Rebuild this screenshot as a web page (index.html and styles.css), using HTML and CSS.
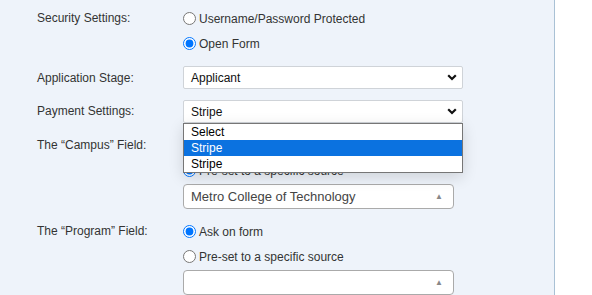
FILE: index.html
```html
<!DOCTYPE html>
<html lang="en">
<head>
  <meta charset="UTF-8" />
  <meta name="viewport" content="width=device-width, initial-scale=1.0"/>
  <title>Form settings</title>
  <link rel="stylesheet" href="styles.css">
</head>
<body>
  <div class="panel">
    <div class="form-grid">
      <div class="label">Security Settings:</div>
      <div class="field">
        <label class="radio"><input type="radio" name="security"> Username/Password Protected</label>
        <label class="radio"><input type="radio" name="security" checked> Open Form</label>
      </div>

      <div class="label stage">Application Stage:</div>
      <div class="field">
        <div class="select">
          <span>Applicant</span>
          <svg class="chevron" width="10" height="7" viewBox="0 0 10 7"><polyline points="1.2,1.2 5,5 8.8,1.2" fill="none" stroke="#111" stroke-width="2.2"/></svg>
        </div>
      </div>

      <div class="label payment">Payment Settings:</div>
      <div class="field">
        <div class="select open">
          <span>Stripe</span>
          <svg class="chevron" width="10" height="7" viewBox="0 0 10 7"><polyline points="1.2,1.2 5,5 8.8,1.2" fill="none" stroke="#111" stroke-width="2.2"/></svg>
          <ul class="options">
            <li>Select</li>
            <li class="active">Stripe</li>
            <li>Stripe</li>
          </ul>
        </div>
      </div>

      <div class="label">The “Campus” Field:</div>
      <div class="field">
        <label class="radio"><input type="radio" name="campus"> Ask on form</label>
        <label class="radio"><input type="radio" name="campus" checked> Pre-set to a specific source</label>
        <div class="chosen">
          <span>Metro College of Technology</span>
          <span class="arrow">▲</span>
        </div>
      </div>

      <div class="label">The “Program” Field:</div>
      <div class="field">
        <label class="radio"><input type="radio" name="program" checked> Ask on form</label>
        <label class="radio"><input type="radio" name="program"> Pre-set to a specific source</label>
        <div class="chosen">
          <span></span>
          <span class="arrow">▲</span>
        </div>
      </div>
    </div>
  </div>
</body>
</html>
```

FILE: styles.css
```css
body {
  margin: 0;
  font-family: 'Liberation Sans', Arial, sans-serif;
  font-size: 12px;
  color: #333;
  background: #fff;
}
.panel {
  width: 554px;
  height: 295px;
  background: #eef3fa;
  border-right: 1px solid #a9c1d5;
  overflow: hidden;
}
.form-grid {
  display: grid;
  grid-template-columns: 146px 280px;
  row-gap: 10px;
  padding: 6px 0 0 37px;
}
.label {
  line-height: 25px;
}
.label.stage { line-height: 24px; }
.label.payment { line-height: 23px; }
.field {
  display: flex;
  flex-direction: column;
}
.radio {
  display: flex;
  align-items: center;
  height: 25px;
}
.radio input {
  margin: 0 3px 0 0;
  width: 13px;
  height: 13px;
}
.select {
  position: relative;
  height: 23px;
  box-sizing: border-box;
  border: 1px solid #cfd3d8;
  border-radius: 2px;
  background: #fff;
  display: flex;
  align-items: center;
  padding: 0 7px;
  color: #111;
}
.select span { flex: 1; }
.chevron { margin-right: -2px; }
.options {
  position: absolute;
  top: 22px;
  left: -1px;
  width: 280px;
  box-sizing: border-box;
  margin: 0;
  padding: 0;
  list-style: none;
  background: #fff;
  border: 1px solid #767676;
  box-shadow: 0 4px 14px rgba(0,0,0,0.14);
  z-index: 10;
}
.options li {
  height: 16px;
  line-height: 16px;
  padding-left: 7px;
  color: #000;
}
.options li.active {
  background: #0b72e0;
  color: #fff;
}
.chosen {
  margin-top: 1px;
  width: 271px;
  height: 25px;
  box-sizing: border-box;
  border: 1px solid #aaa;
  border-radius: 4px;
  background: #fff;
  display: flex;
  align-items: center;
  padding: 0 8px 0 7px;
  font-size: 13px;
  color: #444;
}
.chosen span:first-child { flex: 1; }
.chosen .arrow {
  font-size: 8px;
  color: #888;
  margin-right: 2px;
}
```
